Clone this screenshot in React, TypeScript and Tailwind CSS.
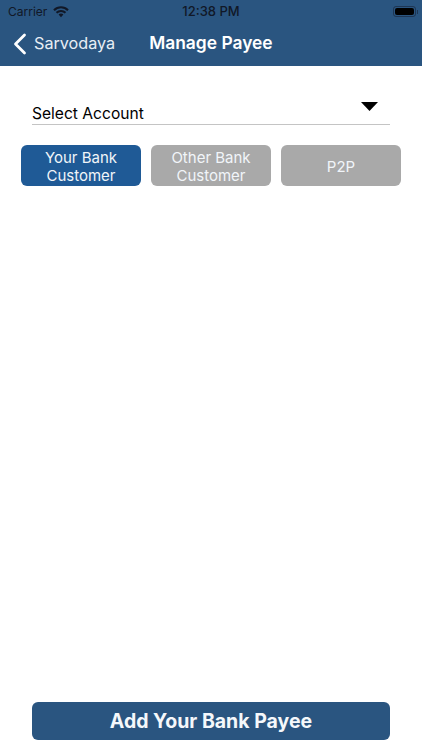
import React from 'react';

const WifiIcon = () => (
  <svg width="16" height="12" viewBox="0 0 16 12" fill="none" stroke="#111827" strokeWidth="2.100">
    <path d="M1 4.200C4.900.3 11.100.3 15 4.200" />
    <path d="M3.500 6.800c2.500-2.500 6.500-2.500 9 0" />
    <path d="M8 7.400c-1 0-1.800.4-2.400 1L8 11.200l2.400-2.800c-.6-.6-1.400-1-2.400-1z" fill="#111827" stroke="none" />
  </svg>
);

const StatusBar = () => (
  <div className="relative flex h-[21px] items-center pl-[8px] pr-[3px] pt-[2px] text-[#111827]">
    <span className="text-[12px] leading-none">Carrier</span>
    <span className="ml-[6px] flex"><WifiIcon /></span>
    <span className="absolute left-0 right-0 text-center text-[13px] font-medium leading-none">12:38 PM</span>
    <div className="ml-auto flex items-center pr-[1px]">
      <div className="flex h-[11px] w-[23px] items-center rounded-[3px] border border-[#111827]/50 p-[1px]">
        <div className="h-full w-full rounded-[2px] bg-black" />
      </div>
      <div className="ml-[1px] h-[4px] w-[1px] bg-[#111827]/50" />
    </div>
  </div>
);

const TabButton = ({ active, lines }: { active?: boolean; lines: string[] }) => (
  <button
    className={`flex h-[41px] w-[120px] flex-col items-center justify-center rounded-[6px] pt-[2px] text-[15px] leading-[18px] text-[#f1f5f9] ${
      active ? 'bg-[#1f5a96]' : 'bg-[#a9a9a9]'
    }`}
  >
    {lines.map((line) => (
      <span key={line}>{line}</span>
    ))}
  </button>
);

export default function App() {
  return (
    <div className="flex h-[750px] w-[422px] flex-col bg-white font-['Inter',sans-serif]">
      <header className="h-[66px] bg-[#2a5580]">
        <StatusBar />
        <div className="flex h-[45px] items-center text-white">
          <svg className="ml-[13px]" width="14" height="22" viewBox="0 0 14 22" fill="none" stroke="white" strokeWidth="2.800" strokeLinecap="round" strokeLinejoin="round">
            <path d="M11.500 2 2.500 11l9 9" />
          </svg>
          <span className="ml-[7px] text-[16.2px] text-[#e8eef5]">Sarvodaya</span>
          <span className="ml-[34px] text-[17.4px] font-semibold">Manage Payee</span>
        </div>
      </header>

      <main className="flex flex-1 flex-col">
        <div className="mx-[32px] mt-[30px] flex h-[29px] justify-between border-b border-[#c4c4c4]">
          <span className="mt-[8px] text-[15.6px] leading-[20px] text-black">Select Account</span>
          <svg className="mr-[12px] mt-[6px]" width="17" height="9" viewBox="0 0 17 9" fill="black">
            <path d="M0 0h17L8.500 9z" />
          </svg>
        </div>

        <div className="mt-[20px] flex justify-center gap-[10px]">
          <TabButton active lines={['Your Bank', 'Customer']} />
          <TabButton lines={['Other Bank', 'Customer']} />
          <TabButton lines={['P2P']} />
        </div>

        <button className="mx-[32px] mb-[10px] mt-auto h-[38px] rounded-[6px] bg-[#2a5580] pt-[1px] text-[19.5px] font-bold text-[#f5f8fb]">
          Add Your Bank Payee
        </button>
      </main>
    </div>
  );
}
